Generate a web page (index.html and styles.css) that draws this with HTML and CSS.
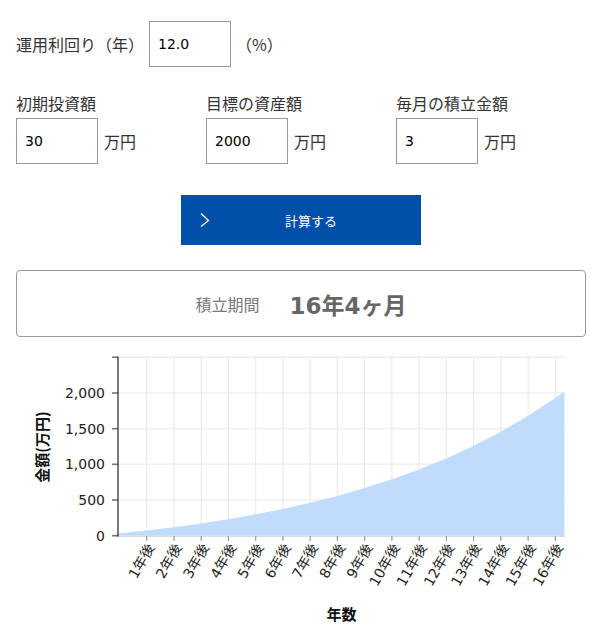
FILE: index.html
```html
<!DOCTYPE html>
<html lang="ja">
<head>
<meta charset="utf-8">
<title>積立シミュレーション</title>
<link rel="stylesheet" href="styles.css">
</head>
<body>
<div class="page">
  <div class="rate-row">
    <span class="rate-label">運用利回り（年）</span>
    <input class="num-input" type="text" value="12.0">
    <span class="pct">（%）</span>
  </div>
  <div class="fields">
    <div class="field">
      <div class="field-label">初期投資額</div>
      <div class="field-row"><input class="num-input" type="text" value="30"><span class="unit">万円</span></div>
    </div>
    <div class="field">
      <div class="field-label">目標の資産額</div>
      <div class="field-row"><input class="num-input" type="text" value="2000"><span class="unit">万円</span></div>
    </div>
    <div class="field">
      <div class="field-label">毎月の積立金額</div>
      <div class="field-row"><input class="num-input" type="text" value="3"><span class="unit">万円</span></div>
    </div>
  </div>
  <div class="btn-wrap">
    <button class="calc-btn" type="button">
      <svg class="chev" width="10" height="16" viewBox="0 0 10 16"><polyline points="1,1.5 8.5,8.5 1,14.5" fill="none" stroke="#fff" stroke-width="1.2"/></svg>
      <span class="btn-text">計算する</span>
    </button>
  </div>
  <div class="result">
    <span class="result-label">積立期間</span>
    <span class="result-value">16年4ヶ月</span>
  </div>
</div>
<svg class="chart" width="597" height="296" viewBox="0 340 597 296">
  <g class="hgrid" stroke="#f0f0f0" stroke-width="1.5">
    <line x1="118" y1="357.2" x2="565" y2="357.2"/>
    <line x1="118" y1="393" x2="565" y2="393"/>
    <line x1="118" y1="428.7" x2="565" y2="428.7"/>
    <line x1="118" y1="464.3" x2="565" y2="464.3"/>
    <line x1="118" y1="500" x2="565" y2="500"/>
  </g>
  <g class="vgrid" stroke="#e6e6e6" stroke-width="1">
    <line x1="146.74" y1="357" x2="146.74" y2="536"/>
    <line x1="173.98" y1="357" x2="173.98" y2="536"/>
    <line x1="201.22" y1="357" x2="201.22" y2="536"/>
    <line x1="228.46" y1="357" x2="228.46" y2="536"/>
    <line x1="255.70" y1="357" x2="255.70" y2="536"/>
    <line x1="282.94" y1="357" x2="282.94" y2="536"/>
    <line x1="310.18" y1="357" x2="310.18" y2="536"/>
    <line x1="337.42" y1="357" x2="337.42" y2="536"/>
    <line x1="364.66" y1="357" x2="364.66" y2="536"/>
    <line x1="391.90" y1="357" x2="391.90" y2="536"/>
    <line x1="419.14" y1="357" x2="419.14" y2="536"/>
    <line x1="446.38" y1="357" x2="446.38" y2="536"/>
    <line x1="473.62" y1="357" x2="473.62" y2="536"/>
    <line x1="500.86" y1="357" x2="500.86" y2="536"/>
    <line x1="528.10" y1="357" x2="528.10" y2="536"/>
    <line x1="555.34" y1="357" x2="555.34" y2="536"/>
  </g>
  <path class="area" fill="#bfdcfd" d="M118,535.7 L118,533.6 L146.74,530.57 L173.98,527.2 L201.22,523.41 L228.46,519.13 L255.7,514.31 L282.94,508.89 L310.18,502.77 L337.42,495.88 L364.66,488.11 L391.9,479.36 L419.14,469.49 L446.38,458.38 L473.62,445.86 L500.86,431.75 L528.1,415.85 L555.34,397.93 L564.42,391.47 L564.42,535.7 Z"/>
  <line x1="118" y1="536.2" x2="565" y2="536.2" stroke="#d9d9d9" stroke-width="1.5"/>
  <g class="xticks" stroke="#999" stroke-width="1.2">
    <line x1="146.74" y1="536" x2="146.74" y2="541"/>
    <line x1="173.98" y1="536" x2="173.98" y2="541"/>
    <line x1="201.22" y1="536" x2="201.22" y2="541"/>
    <line x1="228.46" y1="536" x2="228.46" y2="541"/>
    <line x1="255.70" y1="536" x2="255.70" y2="541"/>
    <line x1="282.94" y1="536" x2="282.94" y2="541"/>
    <line x1="310.18" y1="536" x2="310.18" y2="541"/>
    <line x1="337.42" y1="536" x2="337.42" y2="541"/>
    <line x1="364.66" y1="536" x2="364.66" y2="541"/>
    <line x1="391.90" y1="536" x2="391.90" y2="541"/>
    <line x1="419.14" y1="536" x2="419.14" y2="541"/>
    <line x1="446.38" y1="536" x2="446.38" y2="541"/>
    <line x1="473.62" y1="536" x2="473.62" y2="541"/>
    <line x1="500.86" y1="536" x2="500.86" y2="541"/>
    <line x1="528.10" y1="536" x2="528.10" y2="541"/>
    <line x1="555.34" y1="536" x2="555.34" y2="541"/>
  </g>
  <g class="yticks" stroke="#777" stroke-width="1.6">
    <line x1="112" y1="357.2" x2="118" y2="357.2"/>
    <line x1="112" y1="393" x2="118" y2="393"/>
    <line x1="112" y1="428.7" x2="118" y2="428.7"/>
    <line x1="112" y1="464.3" x2="118" y2="464.3"/>
    <line x1="112" y1="500" x2="118" y2="500"/>
    <line x1="112" y1="535.7" x2="118" y2="535.7"/>
  </g>
  <line x1="118" y1="356.5" x2="118" y2="536.5" stroke="#222" stroke-width="1.2"/>
  <g class="ylabels" text-anchor="end">
    <text x="105" y="398">2,000</text>
    <text x="105" y="433.7">1,500</text>
    <text x="105" y="469.3">1,000</text>
    <text x="105" y="505">500</text>
    <text x="105" y="540.7">0</text>
  </g>
  <g class="xlabels" text-anchor="end">
    <text transform="translate(150.7,545) rotate(-60)" dy="0.35em">1年後</text>
    <text transform="translate(177.9,545) rotate(-60)" dy="0.35em">2年後</text>
    <text transform="translate(205.2,545) rotate(-60)" dy="0.35em">3年後</text>
    <text transform="translate(232.4,545) rotate(-60)" dy="0.35em">4年後</text>
    <text transform="translate(259.7,545) rotate(-60)" dy="0.35em">5年後</text>
    <text transform="translate(286.9,545) rotate(-60)" dy="0.35em">6年後</text>
    <text transform="translate(314.2,545) rotate(-60)" dy="0.35em">7年後</text>
    <text transform="translate(341.4,545) rotate(-60)" dy="0.35em">8年後</text>
    <text transform="translate(368.7,545) rotate(-60)" dy="0.35em">9年後</text>
    <text transform="translate(395.9,545) rotate(-60)" dy="0.35em">10年後</text>
    <text transform="translate(423.1,545) rotate(-60)" dy="0.35em">11年後</text>
    <text transform="translate(450.4,545) rotate(-60)" dy="0.35em">12年後</text>
    <text transform="translate(477.6,545) rotate(-60)" dy="0.35em">13年後</text>
    <text transform="translate(504.9,545) rotate(-60)" dy="0.35em">14年後</text>
    <text transform="translate(532.1,545) rotate(-60)" dy="0.35em">15年後</text>
    <text transform="translate(559.3,545) rotate(-60)" dy="0.35em">16年後</text>
  </g>
  <text class="axis-title" x="341.5" y="619.5" text-anchor="middle">年数</text>
  <text class="axis-title" transform="translate(48,447) rotate(-90)" text-anchor="middle">金額(万円)</text>
</svg>
</body>
</html>
```
FILE: styles.css
```css
body {
  margin: 0;
  font-family: "DejaVu Sans", "Noto Sans CJK JP", sans-serif;
  color: #333;
  background: #fff;
}
.page {
  width: 570px;
  padding: 21px 0 0 16px;
}
.rate-row {
  display: flex;
  align-items: center;
  height: 46px;
}
.rate-label {
  font-family: "Noto Sans CJK JP", sans-serif;
  font-size: 16px;
  margin-right: 5px;
}
.num-input {
  box-sizing: border-box;
  width: 82px;
  height: 46px;
  margin: 0;
  border: 1px solid #999;
  border-radius: 0;
  padding: 0 8px;
  font-family: "DejaVu Sans", sans-serif;
  font-size: 14px;
  color: #000;
  background: #fff;
  outline: none;
}
.pct {
  margin-left: 5px;
  font-family: "Noto Sans CJK JP", sans-serif;
  font-size: 16px;
}
.fields {
  display: grid;
  grid-template-columns: 190px 190px 190px;
  margin-top: 25px;
}
.field-label {
  font-family: "Noto Sans CJK JP", sans-serif;
  font-size: 16px;
  line-height: 22px;
  height: 22px;
}
.field-row {
  display: flex;
  align-items: center;
  gap: 6px;
  margin-top: 4px;
}
.unit {
  font-family: "Noto Sans CJK JP", sans-serif;
  font-size: 16px;
}
.btn-wrap {
  display: flex;
  justify-content: center;
  margin-top: 31px;
}
.calc-btn {
  display: flex;
  align-items: center;
  width: 240px;
  height: 50px;
  padding: 0 9px 0 19px;
  border: none;
  border-radius: 0;
  background: #0050aa;
  color: #fff;
  font-family: "Noto Sans CJK JP", sans-serif;
  font-size: 13px;
  cursor: pointer;
}
.chev {
  display: block;
  flex: none;
}
.btn-text {
  flex: 1;
  text-align: center;
}
.result {
  box-sizing: border-box;
  height: 67px;
  margin-top: 25px;
  border: 1px solid #999;
  border-radius: 4px;
  display: flex;
  align-items: center;
  justify-content: center;
  gap: 30px;
  color: #666;
}
.result-label {
  font-family: "Noto Sans CJK JP", sans-serif;
  font-size: 16px;
  color: #777;
}
.result-value {
  font-family: "DejaVu Sans", "Noto Sans CJK JP", sans-serif;
  font-weight: bold;
  font-size: 23px;
  color: #666;
}
.chart {
  display: block;
  margin-top: 3px;
}
.ylabels text {
  font-family: "DejaVu Sans", sans-serif;
  font-size: 14px;
  fill: #222;
}
.xlabels text {
  font-family: "DejaVu Sans", "Noto Sans CJK JP", sans-serif;
  font-size: 14px;
  fill: #222;
}
.axis-title {
  font-family: "Noto Sans CJK JP", sans-serif;
  font-weight: bold;
  font-size: 15px;
  fill: #111;
}
```
